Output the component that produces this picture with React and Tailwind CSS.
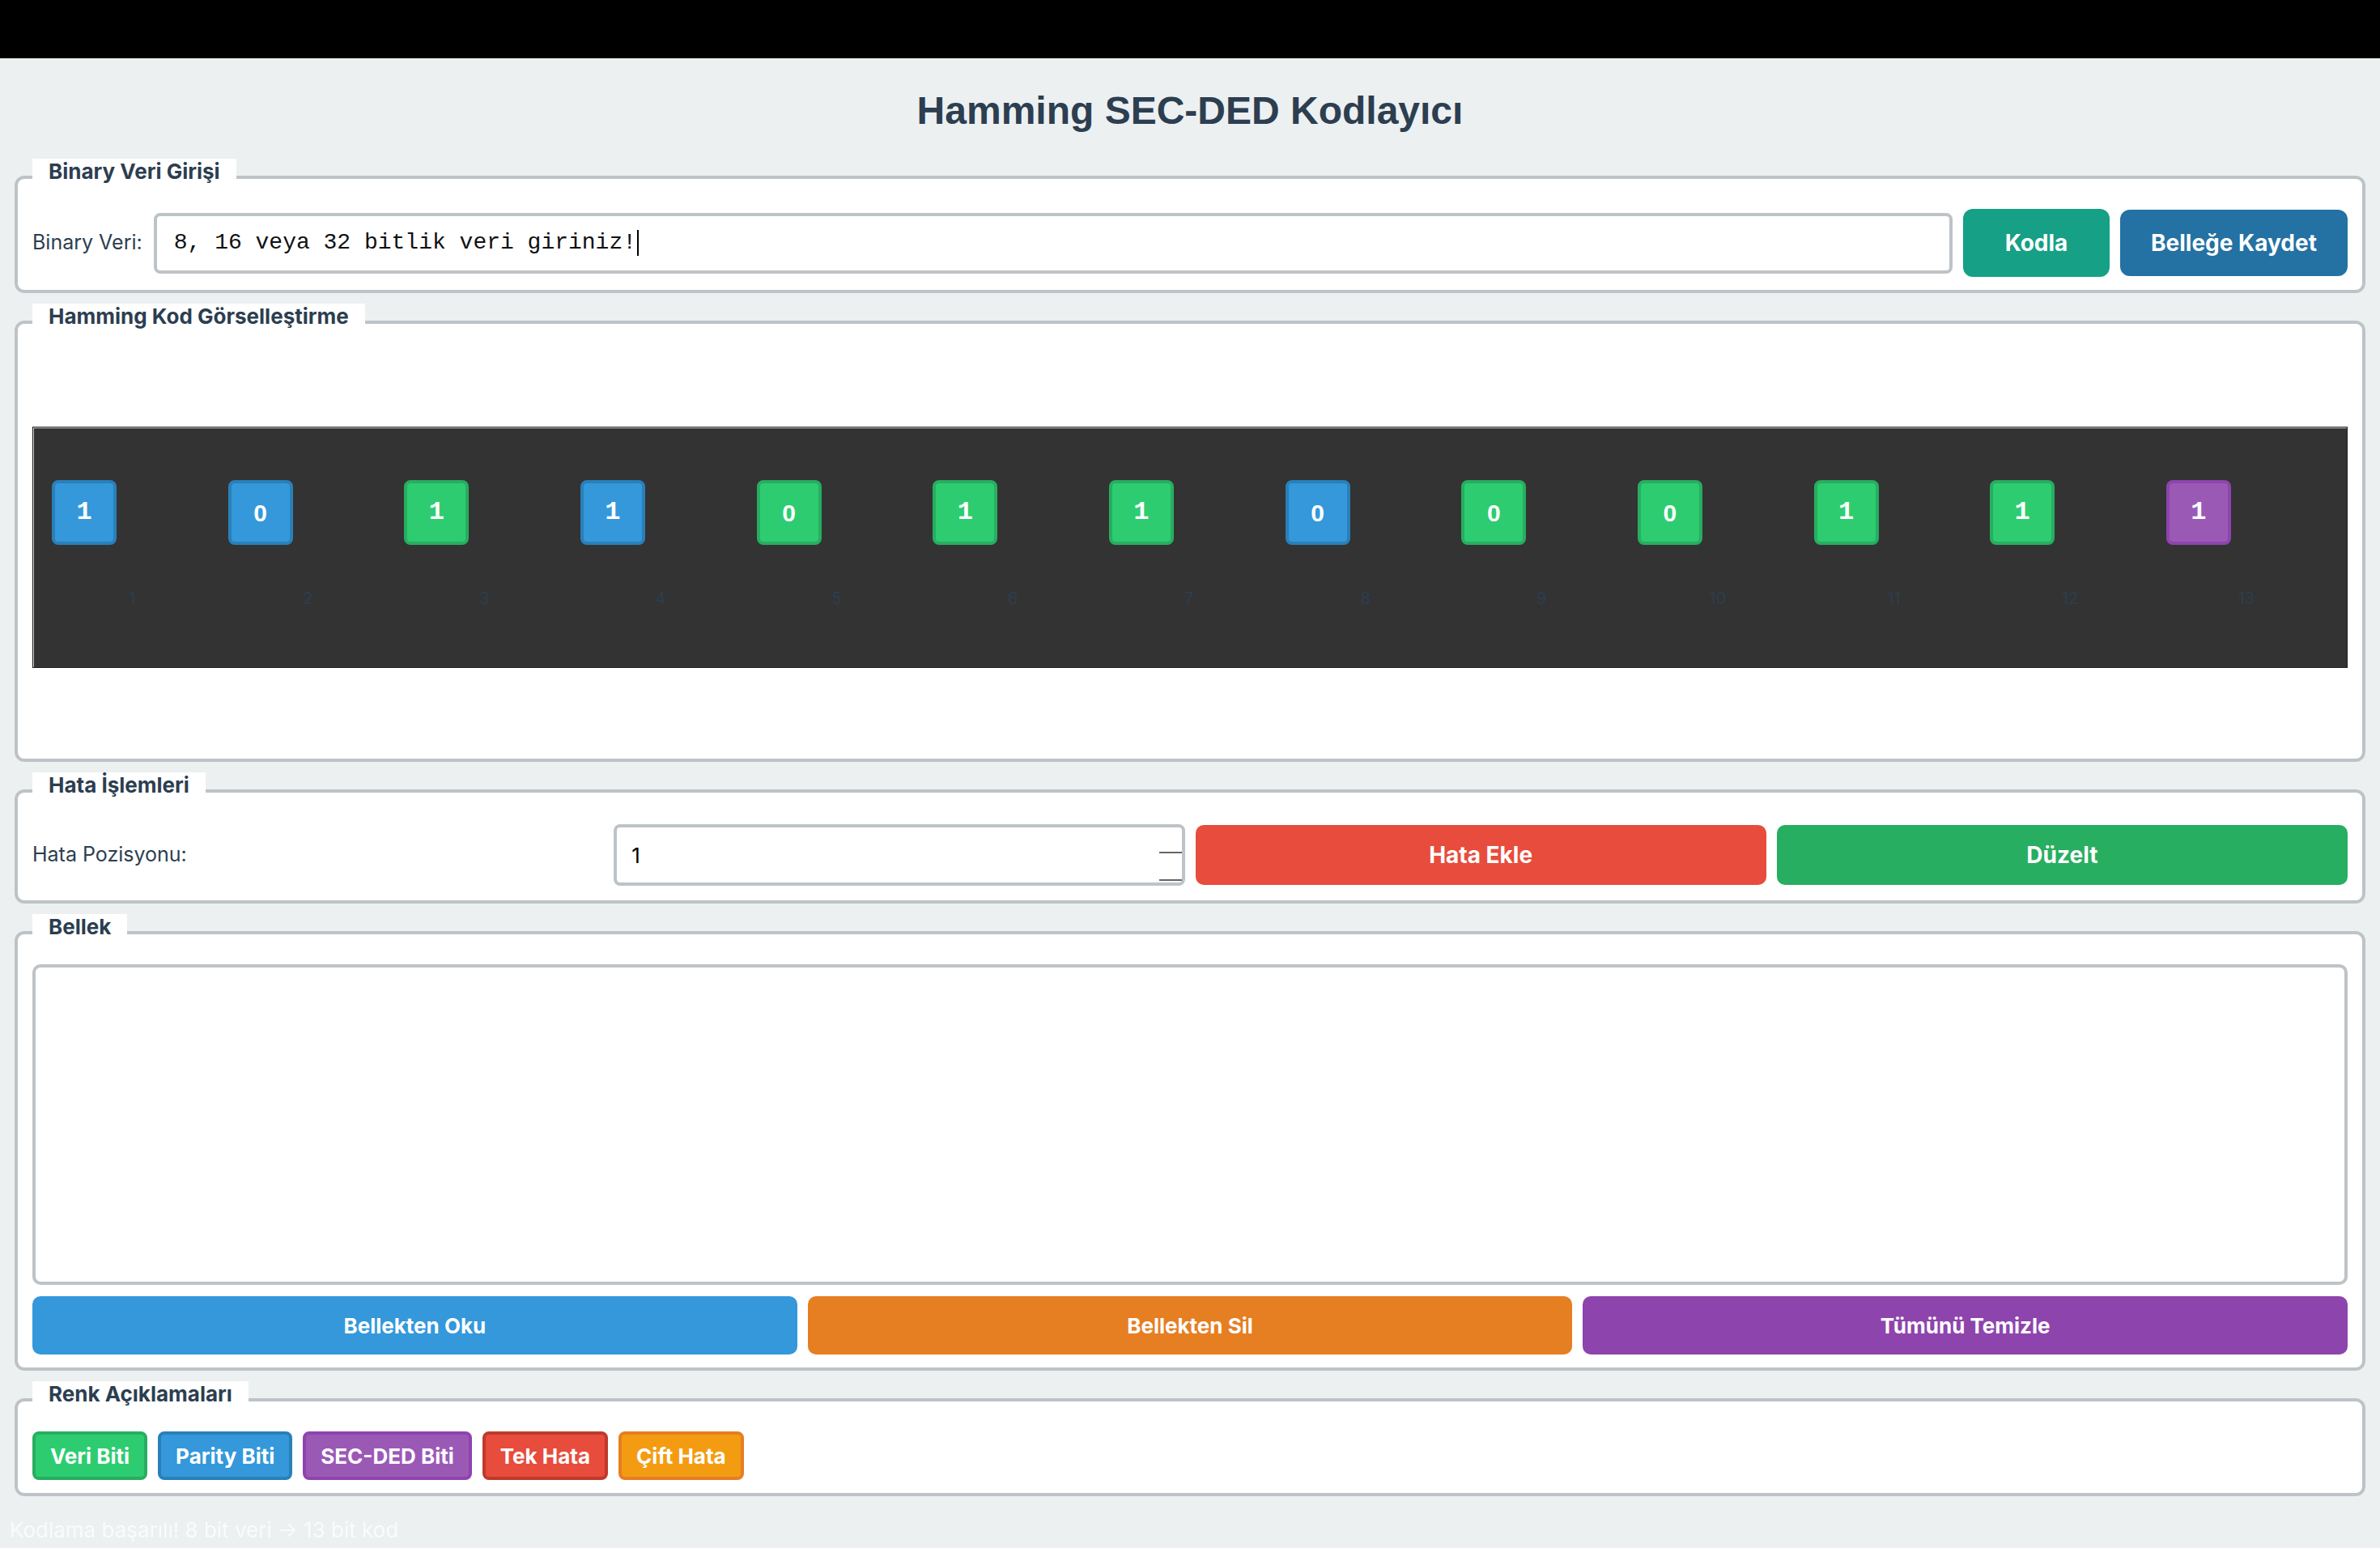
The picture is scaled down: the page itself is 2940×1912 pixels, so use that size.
import React from "react";

const bits = [
  { v: 1, t: "p" },
  { v: 0, t: "p" },
  { v: 1, t: "d" },
  { v: 1, t: "p" },
  { v: 0, t: "d" },
  { v: 1, t: "d" },
  { v: 1, t: "d" },
  { v: 0, t: "p" },
  { v: 0, t: "d" },
  { v: 0, t: "d" },
  { v: 1, t: "d" },
  { v: 1, t: "d" },
  { v: 1, t: "s" },
];

const cellStyles = {
  p: "bg-[#3498db] border-[#2980b9]",
  d: "bg-[#2ecc71] border-[#27ae60]",
  s: "bg-[#9b59b6] border-[#8e44ad]",
};

// zero drawn with a plain oval (no dotted zero), one with a footed glyph
const digitFont = {
  0: "font-['Liberation_Sans',Arial,sans-serif] text-[30px]",
  1: "font-['Liberation_Mono','Courier_New',monospace] text-[32px]",
};

const legendItems = [
  { label: "Veri Biti", cls: "bg-[#2ecc71] border-[#27ae60]" },
  { label: "Parity Biti", cls: "bg-[#3498db] border-[#2980b9]" },
  { label: "SEC-DED Biti", cls: "bg-[#9b59b6] border-[#8e44ad]" },
  { label: "Tek Hata", cls: "bg-[#e74c3c] border-[#c0392b]" },
  { label: "Çift Hata", cls: "bg-[#f39c12] border-[#e67e22]" },
];

const Box = ({ title, children }) => (
  <fieldset className="border-4 border-[#bdc3c7] rounded-[12px] bg-white px-[18px] pt-[16px] pb-[16px]">
    <legend className="bg-white px-[20px] pb-[14px] text-[26px] leading-[32px] font-bold text-[#2c3e50]">
      {title}
    </legend>
    {children}
  </fieldset>
);

const App = () => {
  return (
    <div className="min-h-screen bg-[#ecf0f1] font-['Inter',sans-serif]">
      <div className="h-[72px] bg-black" />

      <div className="px-[18px]">
        <h1 className="mt-[37px] mb-[31px] text-center text-[48px] leading-[56px] font-bold text-[#2c3e50] font-['Liberation_Sans',Arial,sans-serif]">
          Hamming SEC-DED Kodlayıcı
        </h1>

        <div className="flex flex-col gap-[13px]">
          {/* Binary input */}
          <Box title="Binary Veri Girişi">
            <div className="flex items-center gap-[13px] h-[84px]">
              <span className="text-[25px] text-[#2c3e50] pr-[1px]">Binary Veri:</span>
              <div className="flex-1 h-[75px] border-4 border-[#bdc3c7] rounded-[8px] px-[21px] flex items-center font-['Liberation_Mono','Courier_New',monospace] text-[28px] text-[#111]">
                8, 16 veya 32 bitlik veri giriniz!
                <span className="w-[2px] h-[32px] bg-black ml-[1px]" />
              </div>
              <button className="w-[181px] h-[84px] rounded-[12px] bg-[#16a085] text-white font-bold text-[28px]">
                Kodla
              </button>
              <button className="w-[281px] h-[82px] rounded-[12px] bg-[#2471a3] text-white font-bold text-[28px]">
                Belleğe Kaydet
              </button>
            </div>
          </Box>

          {/* Visualisation */}
          <Box title="Hamming Kod Görselleştirme">
            <div className="pt-[90px] pb-[96px]">
              <div className="h-[298px] bg-[#333333] border border-[#1c1c1c] shadow-[inset_1px_1px_0_#d0d0d0]">
                <div className="h-full flex items-center pl-[23px] pb-[8px]">
                  {bits.map((b, i) => (
                    <div key={i} className="w-[217.67px] shrink-0 flex flex-col">
                      <div
                        className={`w-[80px] h-[80px] rounded-[8px] border-4 flex items-center justify-center text-white font-bold ${digitFont[b.v]} ${cellStyles[b.t]}`}
                      >
                        {b.v}
                      </div>
                      <div className="w-[198px] mt-[54px] text-center text-[20px] leading-[24px] text-[#2c3e50]">
                        {i + 1}
                      </div>
                    </div>
                  ))}
                </div>
              </div>
            </div>
          </Box>

          {/* Error ops */}
          <Box title="Hata İşlemleri">
            <div className="grid grid-cols-4 gap-[13px] h-[80px] items-center">
              <span className="text-[25px] text-[#2c3e50]">Hata Pozisyonu:</span>
              <div className="h-[76px] border-4 border-[#bdc3c7] rounded-[8px] pl-[18px] flex items-center justify-between text-[26px] text-black">
                <span>1</span>
                <div className="self-end mb-[2px] w-[28px] h-[36px] flex flex-col justify-between">
                  <span className="h-[2px] bg-[#666]" />
                  <span className="h-[2px] bg-[#666]" />
                </div>
              </div>
              <button className="h-[74px] rounded-[10px] bg-[#e74c3c] text-white font-bold text-[28px]">
                Hata Ekle
              </button>
              <button className="h-[74px] rounded-[10px] bg-[#27ae60] text-white font-bold text-[28px]">
                Düzelt
              </button>
            </div>
          </Box>

          {/* Memory */}
          <Box title="Bellek">
            <textarea
              readOnly
              className="block w-full h-[396px] border-4 border-[#bdc3c7] rounded-[10px] resize-none outline-none"
            />
            <div className="grid grid-cols-3 gap-[13px] mt-[14px]">
              <button className="h-[72px] rounded-[10px] bg-[#3498db] text-white font-bold text-[26px]">
                Bellekten Oku
              </button>
              <button className="h-[72px] rounded-[10px] bg-[#e67e22] text-white font-bold text-[26px]">
                Bellekten Sil
              </button>
              <button className="h-[72px] rounded-[10px] bg-[#8e44ad] text-white font-bold text-[26px]">
                Tümünü Temizle
              </button>
            </div>
          </Box>

          {/* Colour legend */}
          <Box title="Renk Açıklamaları">
            <div className="flex gap-[13px]">
              {legendItems.map((item) => (
                <span
                  key={item.label}
                  className={`h-[60px] px-[18px] border-4 rounded-[8px] flex items-center text-white font-bold text-[26px] ${item.cls}`}
                >
                  {item.label}
                </span>
              ))}
            </div>
          </Box>
        </div>
      </div>

      {/* status message */}
      <div className="fixed left-[12px] bottom-[6px] text-[26px] leading-[32px] text-[#fafbfb]">
        Kodlama başarılı! 8 bit veri → 13 bit kod
      </div>
    </div>
  );
};

export default App;
